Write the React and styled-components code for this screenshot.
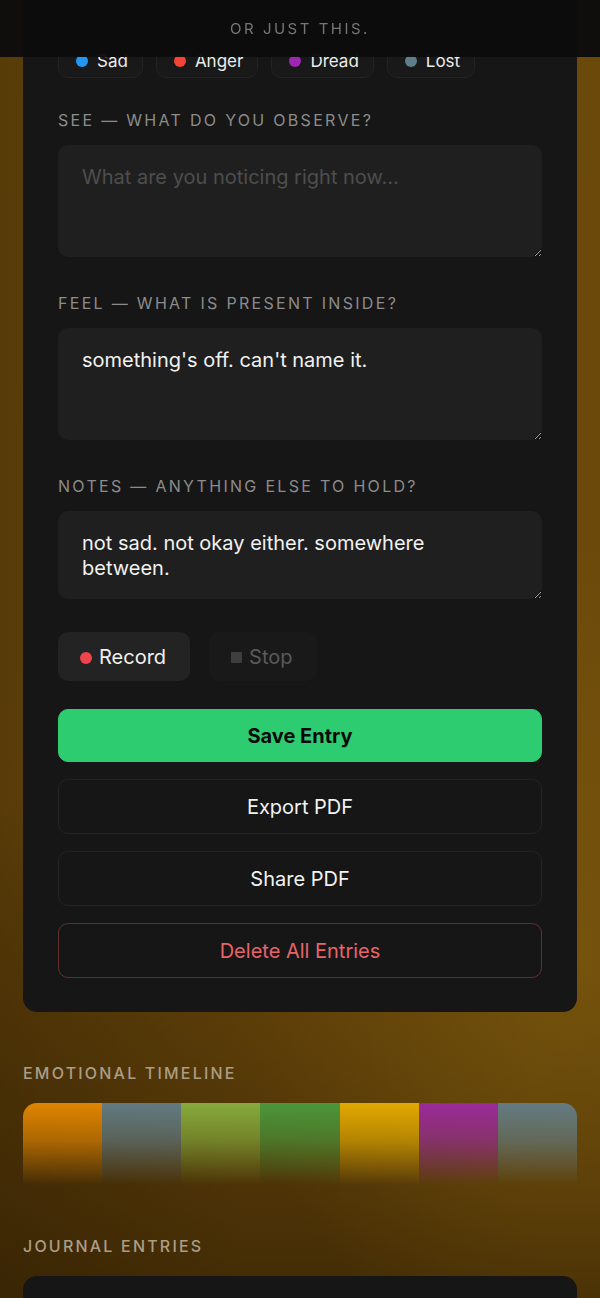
import React from "react";
import styled, { createGlobalStyle } from "styled-components";

const GlobalStyle = createGlobalStyle`
  html, body {
    margin: 0;
    padding: 0;
  }
  body {
    font-family: Inter, "Noto Sans", sans-serif;
    background: #4a3206;
    -webkit-font-smoothing: antialiased;
  }
`;

const Page = styled.div`
  min-height: 1298px;
  padding: 0 23px 0;
  box-sizing: border-box;
  background:
    radial-gradient(ellipse 80% 45% at 95% 72%, rgba(125, 90, 14, 0.75) 0%, rgba(125, 90, 14, 0) 70%),
    linear-gradient(90deg, rgba(30, 18, 0, 0.25) 0%, rgba(30, 18, 0, 0) 40%),
    linear-gradient(180deg, #6a4a0b 0%, #6b490a 60%, #4c3206 90%, #3e2905 100%);
  overflow: hidden;
`;

const TopBar = styled.div`
  position: fixed;
  top: 0;
  left: 0;
  right: 0;
  height: 57px;
  display: flex;
  align-items: center;
  justify-content: center;
  background: rgba(12, 12, 12, 0.97);
  color: #767676;
  font-size: 15px;
  letter-spacing: 2.5px;
  z-index: 10;
`;

const Card = styled.section`
  background: #161616;
  border-radius: 0 0 14px 14px;
  padding: 44px 35px 34px;
  display: flex;
  flex-direction: column;
`;

const ChipRow = styled.div`
  display: flex;
  gap: 13px;
  margin-bottom: 32px;
`;

const Chip = styled.div`
  display: flex;
  align-items: center;
  gap: 9px;
  height: 34px;
  padding: 0 14px 0 17px;
  box-sizing: border-box;
  border: 1px solid #232323;
  border-radius: 10px;
  background: #191919;
  color: #ececec;
  font-size: 17px;
`;

const Dot = styled.span`
  width: 12px;
  height: 12px;
  border-radius: 50%;
  background: ${(p) => p.color};
  flex-shrink: 0;
`;

const Field = styled.div`
  display: flex;
  flex-direction: column;
  margin-bottom: 36px;
`;

const Label = styled.label`
  color: #8c8c8c;
  font-size: 16px;
  line-height: 20px;
  letter-spacing: 2.3px;
  text-transform: uppercase;
  margin-bottom: 15px;
`;

const TextArea = styled.textarea`
  height: ${(p) => p.h}px;
  box-sizing: border-box;
  padding: 20px 34px 19px 24px;
  border: none;
  border-radius: 10px;
  background: #1f1f1f;
  color: #f2f2f2;
  font-family: Inter, "Noto Sans", sans-serif;
  font-size: 20px;
  line-height: 25px;
  outline: none;
  resize: vertical;
  overflow: hidden;
  &::placeholder {
    color: #4e4e4e;
  }
`;

const RecordRow = styled.div`
  display: flex;
  gap: 19px;
  margin-top: -3px;
  margin-bottom: 28px;
`;

const RecButton = styled.button`
  display: flex;
  align-items: center;
  gap: 7px;
  height: 49px;
  padding: 0 24px 0 22px;
  border: none;
  border-radius: 10px;
  background: ${(p) => (p.disabled ? "#191919" : "#232323")};
  color: ${(p) => (p.disabled ? "#5a5a5a" : "#f0f0f0")};
  font-family: Inter, "Noto Sans", sans-serif;
  font-size: 20px;
`;

const RecDot = styled.span`
  width: 12px;
  height: 12px;
  border-radius: 50%;
  background: #f0444c;
  margin-top: 2px;
`;

const StopSquare = styled.span`
  width: 11px;
  height: 11px;
  border-radius: 1px;
  background: #3e3e3e;
  margin-top: 2px;
`;

const Actions = styled.div`
  display: flex;
  flex-direction: column;
  gap: 17px;
`;

const ActionButton = styled.button`
  height: ${(p) => (p.primary ? 53 : 55)}px;
  border-radius: 10px;
  border: 1px solid
    ${(p) => (p.primary ? "#2ecc71" : p.danger ? "#62302f" : "#232323")};
  background: ${(p) => (p.primary ? "#2ecc71" : "transparent")};
  color: ${(p) => (p.primary ? "#0a0a0a" : p.danger ? "#e8646a" : "#f2f2f2")};
  font-family: Inter, "Noto Sans", sans-serif;
  font-size: 20px;
  font-weight: ${(p) => (p.primary ? 700 : 400)};
`;

const SectionTitle = styled.h2`
  margin: 51px 0 20px;
  color: #ab9d86;
  font-size: 16px;
  line-height: 20px;
  font-weight: 500;
  letter-spacing: 2.2px;
  text-transform: uppercase;
`;

const Timeline = styled.div`
  display: grid;
  grid-template-columns: repeat(${(p) => p.count}, 1fr);
  height: 82px;
  border-radius: 14px 14px 0 0;
  overflow: hidden;
`;

const Segment = styled.div`
  background: linear-gradient(
    180deg,
    ${(p) => p.color} 0%,
    ${(p) => p.color}aa 45%,
    ${(p) => p.color}00 100%
  );
`;

const EntryCard = styled.div`
  height: 60px;
  background: #161616;
  border-radius: 14px 14px 0 0;
`;

const moods = [
  { name: "Sad", color: "#2196f3" },
  { name: "Anger", color: "#f44336" },
  { name: "Dread", color: "#9c27b0" },
  { name: "Lost", color: "#607d8b" },
];

const timeline = [
  "#e08500",
  "#617a82",
  "#86aa3c",
  "#4b963a",
  "#e2a900",
  "#9a2a9a",
  "#637b82",
];

const App = () => {
  return (
    <>
      <GlobalStyle />
      <TopBar>OR JUST THIS.</TopBar>
      <Page>
        <Card>
          <ChipRow>
            {moods.map((m) => (
              <Chip key={m.name}>
                <Dot color={m.color} />
                {m.name}
              </Chip>
            ))}
          </ChipRow>

          <Field>
            <Label>See — what do you observe?</Label>
            <TextArea h={112} placeholder="What are you noticing right now..." />
          </Field>
          <Field>
            <Label>Feel — what is present inside?</Label>
            <TextArea h={112} defaultValue="something's off. can't name it." />
          </Field>
          <Field>
            <Label>Notes — anything else to hold?</Label>
            <TextArea
              h={88}
              defaultValue="not sad. not okay either. somewhere between."
            />
          </Field>

          <RecordRow>
            <RecButton>
              <RecDot />
              Record
            </RecButton>
            <RecButton disabled>
              <StopSquare />
              Stop
            </RecButton>
          </RecordRow>

          <Actions>
            <ActionButton primary>Save Entry</ActionButton>
            <ActionButton>Export PDF</ActionButton>
            <ActionButton>Share PDF</ActionButton>
            <ActionButton danger>Delete All Entries</ActionButton>
          </Actions>
        </Card>

        <SectionTitle>Emotional Timeline</SectionTitle>
        <Timeline count={timeline.length}>
          {timeline.map((c, i) => (
            <Segment key={i} color={c} />
          ))}
        </Timeline>

        <SectionTitle>Journal Entries</SectionTitle>
        <EntryCard />
      </Page>
    </>
  );
};

export default App;
